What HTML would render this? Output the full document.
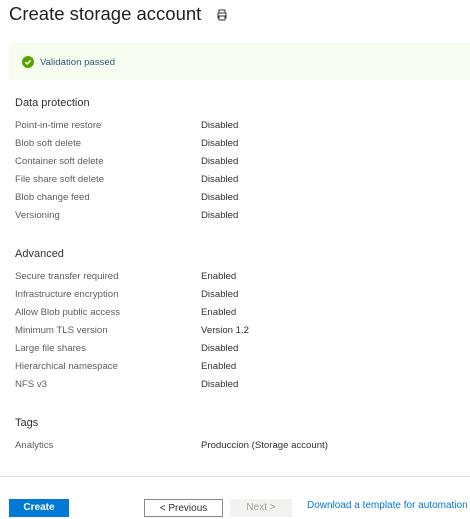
<!DOCTYPE html><html><head><style>
body{margin:0;width:470px;height:519px;background:#fff;font-family:"Liberation Sans",sans-serif;position:relative;overflow:hidden;color:#323130}
.a{position:absolute;white-space:nowrap}
.t{font-size:18.5px;left:9px;top:3px;color:#201f1e}
.ban{position:absolute;left:9px;top:43px;width:461px;height:37px;background:#f6fcf0}
.h{font-size:11px;left:15px;color:#323130}
.l{font-size:9.6px;left:15px;color:#605e5c}
.v{font-size:9.6px;left:201px;color:#323130}
.btn{position:absolute;top:499px;height:18px;font-size:10px;text-align:center;line-height:18px;box-sizing:border-box}
</style></head><body>
<div class="a t">Create storage account</div>
<svg class="a" style="left:216px;top:9px" width="12" height="12" viewBox="0 0 12 12"><path d="M3 4V1h6v3M2 4h8v5H9M3 9H2V4M3 7h6v4H3z" fill="none" stroke="#333" stroke-width="1"/></svg>
<div class="ban"></div>
<svg class="a" style="left:22px;top:56px" width="12" height="12" viewBox="0 0 12 12"><circle cx="6" cy="6" r="6" fill="#57a300"/><path d="M3.3 6.2l1.8 1.8 3.6-3.6" fill="none" stroke="#fff" stroke-width="1.5"/></svg>
<div class="a" style="left:40px;top:57px;font-size:9.6px;color:#2b5c7a">Validation passed</div>
<div class="a h" style="top:97px">Data protection</div>
<div class="a l" style="top:120px">Point-in-time restore</div><div class="a v" style="top:120px">Disabled</div>
<div class="a l" style="top:138px">Blob soft delete</div><div class="a v" style="top:138px">Disabled</div>
<div class="a l" style="top:156px">Container soft delete</div><div class="a v" style="top:156px">Disabled</div>
<div class="a l" style="top:174px">File share soft delete</div><div class="a v" style="top:174px">Disabled</div>
<div class="a l" style="top:192px">Blob change feed</div><div class="a v" style="top:192px">Disabled</div>
<div class="a l" style="top:210px">Versioning</div><div class="a v" style="top:210px">Disabled</div>
<div class="a h" style="top:248px">Advanced</div>
<div class="a l" style="top:271px">Secure transfer required</div><div class="a v" style="top:271px">Enabled</div>
<div class="a l" style="top:289px">Infrastructure encryption</div><div class="a v" style="top:289px">Disabled</div>
<div class="a l" style="top:307px">Allow Blob public access</div><div class="a v" style="top:307px">Enabled</div>
<div class="a l" style="top:325px">Minimum TLS version</div><div class="a v" style="top:325px">Version 1.2</div>
<div class="a l" style="top:343px">Large file shares</div><div class="a v" style="top:343px">Disabled</div>
<div class="a l" style="top:361px">Hierarchical namespace</div><div class="a v" style="top:361px">Enabled</div>
<div class="a l" style="top:379px">NFS v3</div><div class="a v" style="top:379px">Disabled</div>
<div class="a h" style="top:417px">Tags</div>
<div class="a l" style="top:440px">Analytics</div><div class="a v" style="top:440px">Produccion (Storage account)</div>
<div class="a" style="left:0;top:476px;width:470px;height:1px;background:#e1dfdd"></div>
<div class="btn" style="left:9px;width:60px;background:#0078d4;color:#fff;font-weight:bold">Create</div>
<div class="btn" style="left:144px;width:79px;border:1px solid #8a8886;color:#323130">&lt; Previous</div>
<div class="btn" style="left:230px;width:62px;background:#f3f2f1;color:#a19f9d">Next &gt;</div>
<div class="a" style="left:307px;top:500px;font-size:10px;color:#0078d4">Download a template for automation</div>
</body></html>
